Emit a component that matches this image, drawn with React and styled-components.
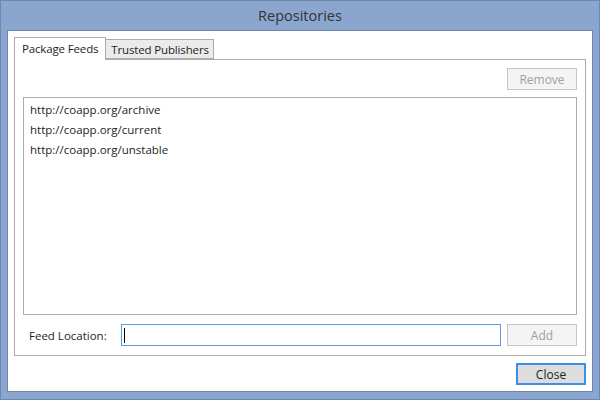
import { useState } from 'react';
import styled, { createGlobalStyle } from 'styled-components';

const GlobalStyle = createGlobalStyle`
  html, body {
    margin: 0;
    padding: 0;
    background: #8ba6ce;
  }
  * {
    box-sizing: border-box;
  }
`;

const Window = styled.div`
  width: 600px;
  height: 400px;
  background: #8ba6ce;
  border: 1px solid #6d88b3;
  display: flex;
  flex-direction: column;
  font-family: "Open Sans", "Noto Sans", sans-serif;
  font-size: 11.5px;
  color: #1e1e1e;
`;

const TitleBar = styled.div`
  height: 29px;
  display: flex;
  align-items: center;
  justify-content: center;
  font-size: 14.5px;
  color: #333;
  padding-bottom: 1px;
`;

const Client = styled.div`
  flex: 1;
  margin: 0 6px 7px 6px;
  border: 1px solid #6f86ab;
  background: #fff;
  padding: 6px 6px 6px 6px;
  display: flex;
  flex-direction: column;
`;

const Tabs = styled.div`
  display: flex;
  align-items: flex-end;
  height: 22px;
  position: relative;
  z-index: 1;
`;

const Tab = styled.div`
  height: ${p => (p.active ? '23px' : '20px')};
  margin-bottom: ${p => (p.active ? '-1px' : '0')};
  padding: ${p => (p.first ? '0 7px 0 7px' : '0 4px 0 5px')};
  padding-bottom: ${p => (p.active ? '2px' : '0')};
  border: 1px solid #acacac;
  border-bottom: ${p => (p.active ? 'none' : '1px solid #acacac')};
  border-left: ${p => (p.first ? '1px solid #acacac' : 'none')};
  background: ${p => (p.active ? '#fff' : '#ebebeb')};
  display: flex;
  align-items: center;
  white-space: nowrap;
  letter-spacing: -0.15px;
  color: #1e1e1e;
  cursor: default;
`;

const Panel = styled.div`
  flex: 1;
  border: 1px solid #acacac;
  padding: 8px 8px 9px 8px;
  display: flex;
  flex-direction: column;
`;

const Toolbar = styled.div`
  display: flex;
  justify-content: flex-end;
`;

const Button = styled.button`
  width: 70px;
  height: 22px;
  font-family: inherit;
  font-size: 12px;
  padding: 0;
  background: ${p => (p.disabled ? '#f4f4f4' : '#dddddd')};
  color: ${p => (p.disabled ? '#a0a0a0' : '#1e1e1e')};
  border: 1px solid ${p => (p.focused ? '#3c8ee6' : p.disabled ? '#c6c6c6' : '#adadad')};
  box-shadow: ${p => (p.focused ? 'inset 0 0 0 1px #3c8ee6' : 'none')};
`;

const FeedList = styled.div`
  flex: 1;
  margin: 7px 0 9px 0;
  border: 1px solid #acacac;
  padding: 2px 6px;
`;

const FeedItem = styled.div`
  height: 20px;
  line-height: 20px;
`;

const Row = styled.div`
  display: flex;
  align-items: center;
  height: 22px;
`;

const Label = styled.label`
  width: 98px;
  padding-left: 6px;
  color: #1e1e1e;
`;

const InputBox = styled.div`
  flex: 1;
  height: 22px;
  margin-right: 6px;
  border: 1px solid #569de5;
  display: flex;
  align-items: center;
  padding-left: 2px;
`;

const Caret = styled.span`
  display: block;
  width: 1px;
  height: 15px;
  background: #000;
`;

const Footer = styled.div`
  display: flex;
  justify-content: flex-end;
  padding-top: 7px;
`;

const feeds = [
  'http://coapp.org/archive',
  'http://coapp.org/current',
  'http://coapp.org/unstable',
];

export default function App() {
  const [tab, setTab] = useState(0);
  return (
    <>
      <GlobalStyle />
      <Window>
        <TitleBar>Repositories</TitleBar>
        <Client>
          <Tabs>
            <Tab first active={tab === 0} onClick={() => setTab(0)}>Package Feeds</Tab>
            <Tab active={tab === 1} onClick={() => setTab(1)}>Trusted Publishers</Tab>
          </Tabs>
          <Panel>
            <Toolbar>
              <Button disabled>Remove</Button>
            </Toolbar>
            <FeedList>
              {feeds.map(f => (
                <FeedItem key={f}>{f}</FeedItem>
              ))}
            </FeedList>
            <Row>
              <Label>Feed Location:</Label>
              <InputBox>
                <Caret />
              </InputBox>
              <Button disabled>Add</Button>
            </Row>
          </Panel>
          <Footer>
            <Button focused>Close</Button>
          </Footer>
        </Client>
      </Window>
    </>
  );
}
